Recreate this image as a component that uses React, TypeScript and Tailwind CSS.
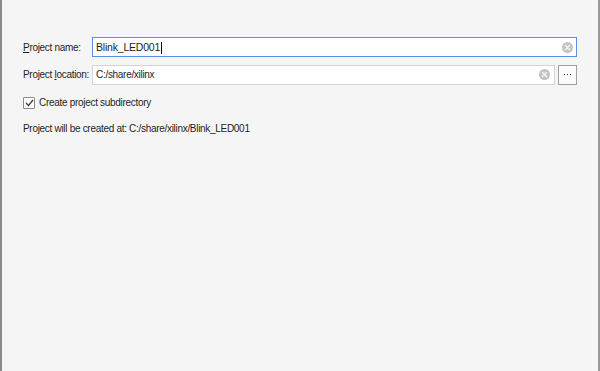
import React from 'react';

function ClearIcon() {
  return (
    <svg width="11" height="11" viewBox="0 0 11 11" className="shrink-0">
      <circle cx="5.5" cy="5.5" r="5.5" fill="#c4c4c4" />
      <path d="M3.5 3.5 L7.5 7.5 M7.5 3.5 L3.5 7.5" stroke="#f4f4f4" strokeWidth="1.5" strokeLinecap="round" />
    </svg>
  );
}

export default function App() {
  return (
    <div
      className="w-[600px] h-[371px] bg-[#f5f5f5] border-l-2 border-r-2 border-l-[#8a8a8a] border-r-[#9a9a9a] text-[10px] tracking-[-0.3px] text-[#1e1e1e] pt-[37px] pl-[21px] pr-[21px]"
      style={{ fontFamily: '"Liberation Sans", Arial, sans-serif' }}
    >
      <div className="flex items-center h-[20px]">
        <span className="w-[69px] shrink-0 whitespace-nowrap">
          <span className="underline">P</span>roject name:
        </span>
        <div className="flex-1 h-[20px] flex items-center bg-white border border-[#5b8ee6] pl-[3px] pr-[3px]">
          <span className="flex-1 text-[10.5px] tracking-[-0.2px] pt-[1px]">
            Blink_LED001<span className="inline-block w-px h-[12px] bg-black align-middle ml-px" />
          </span>
          <ClearIcon />
        </div>
      </div>

      <div className="flex items-center h-[21px] mt-[7px]">
        <span className="w-[69px] shrink-0 whitespace-nowrap">
          Project <span className="underline">l</span>ocation:
        </span>
        <div className="flex-1 h-[20px] flex items-center bg-white border border-[#d4d4d4] pl-[3px] pr-[4px]">
          <span className="flex-1">C:/share/xilinx</span>
          <ClearIcon />
        </div>
        <div className="ml-[3px] w-[19px] h-[20px] border border-[#a0a0a0] bg-[#fbfbfb] flex items-center justify-center gap-[2px]">
          <span className="w-px h-px bg-[#333]" />
          <span className="w-px h-px bg-[#333]" />
          <span className="w-px h-px bg-[#333]" />
        </div>
      </div>

      <div className="flex items-center mt-[11px] h-[13px]">
        <div className="w-[12px] h-[12px] border border-[#8c8c8c] bg-white flex items-center justify-center rounded-[1px]">
          <svg width="9" height="8" viewBox="0 0 9 8">
            <path d="M1 4 L3.5 6.5 L8 1" stroke="#444" strokeWidth="1.4" fill="none" />
          </svg>
        </div>
        <span className="ml-[4px]">Create project subdirectory</span>
      </div>

      <div className="mt-[12px]">Project will be created at: C:/share/xilinx/Blink_LED001</div>
    </div>
  );
}
